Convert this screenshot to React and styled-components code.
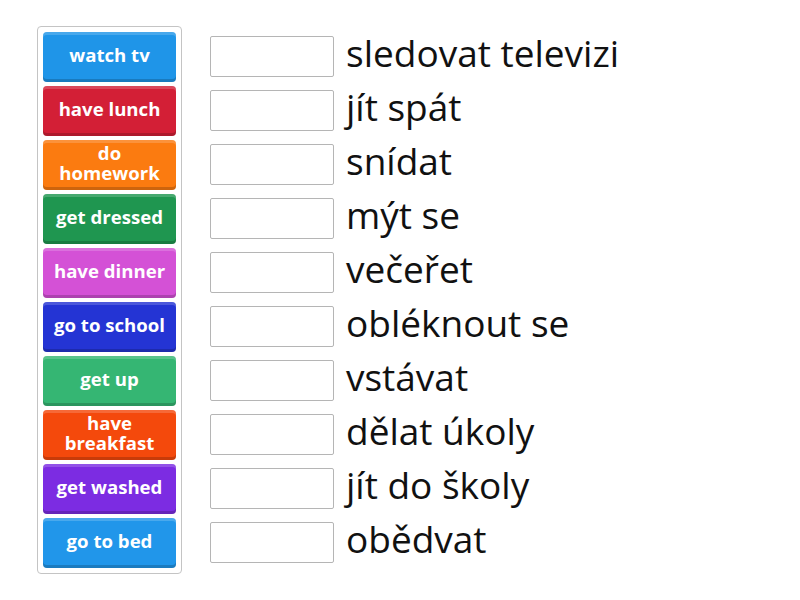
import React from 'react';
import styled, { createGlobalStyle } from 'styled-components';

const GlobalStyle = createGlobalStyle`
	body {
		margin: 0;
		background: #ffffff;
		font-family: "Open Sans", "Liberation Sans", sans-serif;
	}
`;

const Page = styled.div`
	display: flex;
	align-items: flex-start;
	padding: 26px 0 0 37px;
`;

const Bank = styled.div`
	display: flex;
	flex-direction: column;
	gap: 4px;
	padding: 5px 5px 5px 5px;
	border: 1px solid #c4c4c4;
	border-radius: 4px;
`;

const Tile = styled.div`
	width: 133px;
	height: 50px;
	box-sizing: border-box;
	display: flex;
	align-items: center;
	justify-content: center;
	text-align: center;
	padding: 0 8px 4px;
	border-radius: 4px;
	background: ${(p) => p.$color};
	color: #ffffff;
	font-weight: 700;
	font-size: 18.6px;
	line-height: 20px;
	box-shadow: inset 0 -3px 0 rgba(0, 0, 0, 0.18), inset 0 3px 0 rgba(255, 255, 255, 0.18);
`;

const Targets = styled.div`
	display: flex;
	flex-direction: column;
	gap: 13px;
	margin-left: 28px;
	padding-top: 10px;
`;

const Row = styled.div`
	display: flex;
	align-items: center;
	height: 41px;
`;

const Slot = styled.div`
	width: 124px;
	height: 41px;
	box-sizing: border-box;
	border: 1px solid #b5b5b5;
	border-radius: 2px;
	background: #ffffff;
`;

const Label = styled.div`
	margin-left: 12px;
	font-size: 37px;
	color: #111111;
	white-space: nowrap;
	line-height: 41px;
	margin-top: -8px;
`;

const tiles = [
	['watch tv', '#1f95e8'],
	['have lunch', '#d31f36'],
	['do homework', '#fb7b10'],
	['get dressed', '#1f9650'],
	['have dinner', '#d451d6'],
	['go to school', '#2434d4'],
	['get up', '#35b673'],
	['have breakfast', '#f4490c'],
	['get washed', '#7c2ce2'],
	['go to bed', '#2196ea'],
];

const words = [
	'sledovat televizi',
	'jít spát',
	'snídat',
	'mýt se',
	'večeřet',
	'obléknout se',
	'vstávat',
	'dělat úkoly',
	'jít do školy',
	'obědvat',
];

const App = () => {
	return (
		<>
			<GlobalStyle />
			<Page>
				<Bank>
					{tiles.map(([text, color]) => (
						<Tile key={text} $color={color}>
							{text}
						</Tile>
					))}
				</Bank>
				<Targets>
					{words.map((w) => (
						<Row key={w}>
							<Slot />
							<Label>{w}</Label>
						</Row>
					))}
				</Targets>
			</Page>
		</>
	);
};

export default App;
